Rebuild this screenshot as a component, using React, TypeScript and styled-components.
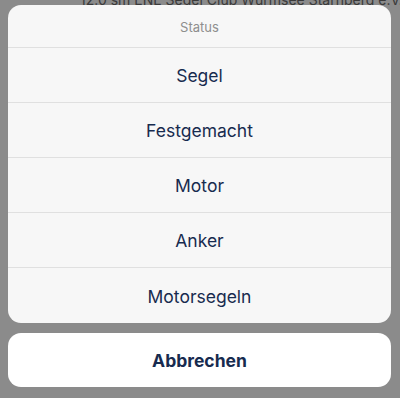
import React from 'react';
import styled, { createGlobalStyle } from 'styled-components';

const GlobalStyle = createGlobalStyle`
  html, body {
    margin: 0;
    padding: 0;
    background: #8b8b8b;
  }
  body {
    font-family: Inter, "Noto Sans", sans-serif;
    -webkit-font-smoothing: antialiased;
  }
`;

const Screen = styled.div`
  position: relative;
  width: 400px;
  height: 398px;
  overflow: hidden;
  background: #8b8b8b;
`;

// list row of the page underneath, mostly hidden by the sheet
const BehindRow = styled.div`
  position: absolute;
  top: -9px;
  left: 80px;
  font-size: 14px;
  color: #3a3a3a;
  white-space: nowrap;
`;

const Sheet = styled.div`
  position: relative;
  display: flex;
  flex-direction: column;
  gap: 10px;
  padding: 5px 9px 11px 8px;
`;

const Group = styled.div`
  display: flex;
  flex-direction: column;
  background: #f7f7f7;
  border-radius: 13px;
  overflow: hidden;
`;

const Title = styled.div`
  height: 43px;
  display: flex;
  align-items: center;
  justify-content: center;
  padding-top: 1px;
  font-size: 13px;
  color: #8e8e8e;
  border-bottom: 1px solid #e0e0e0;
  box-sizing: border-box;
`;

const Option = styled.button<{ $last?: boolean }>`
  height: 55px;
  display: flex;
  align-items: center;
  justify-content: center;
  border: none;
  border-bottom: ${(p) => (p.$last ? 'none' : '1px solid #e0e0e0')};
  background: transparent;
  font-family: inherit;
  font-size: 17.5px;
  color: #172b4f;
  padding: 1px 0 0;
  box-sizing: border-box;
`;

const Cancel = styled.button`
  height: 54px;
  border: none;
  border-radius: 13px;
  background: #ffffff;
  font-family: inherit;
  font-size: 17.5px;
  font-weight: 700;
  color: #172b4f;
  padding: 0;
`;

const options = ['Segel', 'Festgemacht', 'Motor', 'Anker', 'Motorsegeln'];

export default function App() {
  return (
    <Screen>
      <GlobalStyle />
      <BehindRow>12.0 sm ENE Segel Club Würmsee Starnberg e.V.</BehindRow>
      <Sheet>
        <Group>
          <Title>Status</Title>
          {options.map((o, i) => (
            <Option key={o} $last={i === options.length - 1}>
              {o}
            </Option>
          ))}
        </Group>
        <Cancel>Abbrechen</Cancel>
      </Sheet>
    </Screen>
  );
}
